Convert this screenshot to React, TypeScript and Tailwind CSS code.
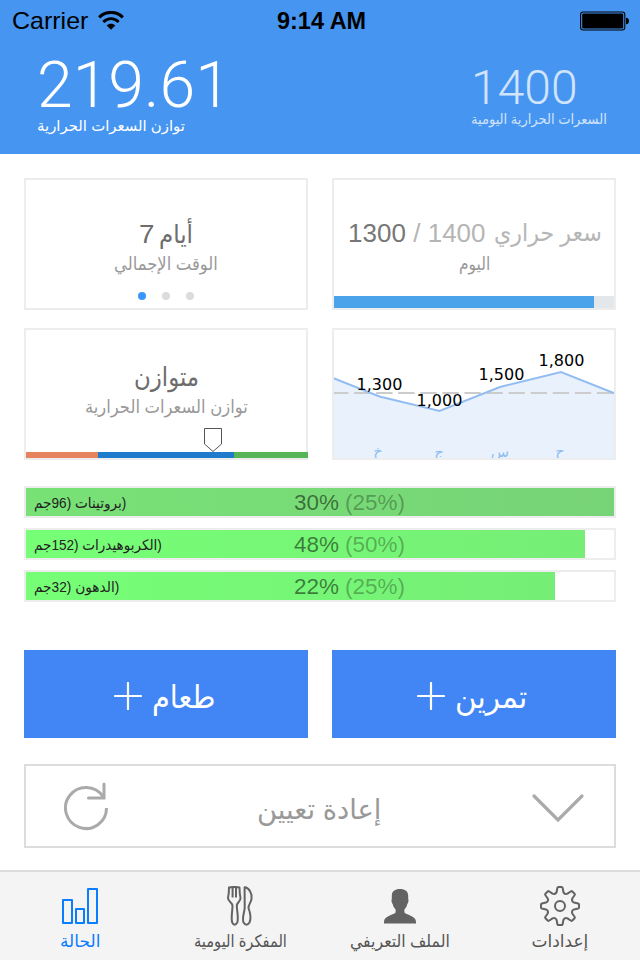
import { useLayoutEffect, useRef, useState } from "react";
import type { ReactNode } from "react";

type FitProps = { w: number; className?: string; dir?: "rtl" | "ltr"; children: ReactNode };

/* A single line of text, condensed or stretched horizontally to a fixed measure. */
function Fit({ w, className = "", dir = "rtl", children }: FitProps) {
  const ref = useRef<HTMLSpanElement>(null);
  const [scale, setScale] = useState(1);
  useLayoutEffect(() => {
    if (ref.current) setScale(w / ref.current.offsetWidth);
  }, [w]);
  return (
    <div dir="ltr" className={`shrink-0 whitespace-nowrap ${className}`} style={{ width: w }}>
      <span ref={ref} dir={dir} className="inline-block origin-left" style={{ transform: `scaleX(${scale})` }}>
        {children}
      </span>
    </div>
  );
}

function StatusBar() {
  return (
    <div className="grid h-[42px] grid-cols-[1fr_auto_1fr] items-center pl-[12px] pr-[10px] text-black">
      <div className="flex items-center gap-[10px]">
        <Fit w={76} dir="ltr" className="text-[24px] leading-[42px]">Carrier</Fit>
        <svg className="h-[20px] w-[26px]" viewBox="0 0 26 20" fill="none" stroke="#000">
          <path d="M1.2 6.3C8 -.1 18 -.1 24.8 6.3" strokeWidth="3.2" />
          <path d="M5.3 11C10 6.8 16 6.8 20.7 11" strokeWidth="3" />
          <path d="M8.7 14.4C11.1 12.2 14.9 12.2 17.3 14.4L13 18.7Z" fill="#000" stroke="none" />
        </svg>
      </div>
      <Fit w={89} dir="ltr" className="text-[24px] font-bold leading-[42px]">9:14 AM</Fit>
      <svg className="h-[20px] w-[50px] justify-self-end" viewBox="0 0 50 20">
        <rect x=".6" y="1" width="44.2" height="18" rx="2.5" fill="none" stroke="#000" strokeWidth="1.1" />
        <rect x="2.2" y="2.5" width="41" height="15" rx="1.2" />
        <path d="M46 6.8c2 0 3 1.3 3 3.2s-1 3.2-3 3.2z" />
      </svg>
    </div>
  );
}

function Header() {
  return (
    <header className="h-[154px] bg-[#4595f1]">
      <StatusBar />
      <div className="flex justify-between pl-[37px] pr-[33px] text-white">
        <div className="pt-[12px]">
          <Fit w={194} dir="ltr" className="h-[62px] font-['Roboto'] text-[64px] font-light leading-[64px]">219.61</Fit>
          <Fit w={148} className="h-[20px] text-[15px] leading-[20px]">توازن السعرات الحرارية</Fit>
        </div>
        <div className="pt-[22px] opacity-75">
          <Fit w={107} dir="ltr" className="h-[46px] font-['Roboto'] text-[48px] font-light leading-[48px]">1400</Fit>
          <Fit w={136} className="h-[18px] text-[14px] leading-[18px]">السعرات الحرارية اليومية</Fit>
        </div>
      </div>
    </header>
  );
}

const card = "flex h-[132px] flex-col items-center overflow-hidden border-2 border-[#ededed]";

function Chart() {
  return (
    <svg className="block h-[128px] w-[280px]" viewBox="334 330 280 128" fontFamily="'DejaVu Sans', sans-serif">
      <path d="M334 378.5L379.5 396.5L439.5 411L500 387L561 372L614 393V458H334Z" fill="#e9f2fc" />
      <path d="M332 393H614" stroke="#ccc" strokeWidth="2" strokeDasharray="16.4 5.67" />
      <path d="M333 378L379.5 396.5L439.5 411L500 387L561 372L615 393.5" fill="none" stroke="#93bdf0" strokeWidth="2" />
      <g fontSize="16" fill="#000">
        <text x="356.500" y="390">1,300</text>
        <text x="416.500" y="406">1,000</text>
        <text x="478.500" y="380">1,500</text>
        <text x="538.500" y="366">1,800</text>
      </g>
      <g fontSize="15" fill="#8fbdf0" textAnchor="middle">
        <text x="378" y="457">خ</text>
        <text x="439" y="457">ج</text>
        <text x="500" y="457">س</text>
        <text x="560" y="457">ح</text>
      </g>
    </svg>
  );
}

function Cards() {
  return (
    <section className="grid grid-cols-2 gap-x-6 gap-y-[18px]">
      <div className={card}>
        <div className="mt-[38px] flex h-[32px] items-center gap-[5px] leading-[32px] text-[#6d6d6d]">
          <Fit w={15} dir="ltr" className="text-[26px]">7</Fit>
          <Fit w={34} className="text-[25px]">أيام</Fit>
        </div>
        <Fit w={104} className="h-[28px] text-[18px] leading-[28px] text-[#999]">الوقت الإجمالي</Fit>
        <div className="mt-[14px] flex gap-4">
          <i className="size-2 rounded-full bg-[#3797fb]" />
          <i className="size-2 rounded-full bg-[#dcdcdc]" />
          <i className="size-2 rounded-full bg-[#dcdcdc]" />
        </div>
      </div>
      <div className={card}>
        <div className="ml-[2px] mt-[37px] flex h-[32px] items-center leading-[32px] text-[#b5b5b5]">
          <Fit w={58} dir="ltr" className="text-[26px] text-[#777]">1300</Fit>
          <Fit w={80} dir="ltr" className="text-[26px]"><span className="whitespace-pre"> / 1400</span></Fit>
          <Fit w={108} className="ml-[8px] text-[24px]">سعر حراري</Fit>
        </div>
        <Fit w={31} className="mt-px h-[28px] text-[18px] leading-[28px] text-[#999]">اليوم</Fit>
        <div className="mt-auto h-[12px] w-full bg-[#e3e7ea]">
          <div className="h-full w-[260px] bg-[#4ba3ea]" />
        </div>
      </div>
      <div className="flex h-[132px] flex-col items-center border-2 border-[#ededed]">
        <Fit w={65} className="mt-[31px] h-[32px] text-[26px] leading-[32px] text-[#6d6d6d]">متوازن</Fit>
        <Fit w={163} className="h-[28px] text-[18px] leading-[29px] text-[#999]">توازن السعرات الحرارية</Fit>
        <svg className="ml-[94px] mt-[7px] h-[24px] w-[18px]" viewBox="0 0 18 24">
          <path d="M.5 .5H17.500V16L9 23.500L.5 16Z" fill="#fff" stroke="#555" />
        </svg>
        <div className="-mr-[2px] flex h-[6px] w-[282px] self-start">
          <div className="w-[72px] bg-[#e5835f]" />
          <div className="w-[136px] bg-[#1f7bcb]" />
          <div className="w-[74px] bg-[#57b558]" />
        </div>
      </div>
      <div className={card}>
        <Chart />
      </div>
    </section>
  );
}

const macros = [
  { name: "بروتينات (96جم", w: 92, pct: "30%", goal: "(25%)", fill: "w-[588px] from-[#78e276] to-[#77d377]" },
  { name: "الكربوهيدرات (152جم", w: 128, pct: "48%", goal: "(50%)", fill: "w-[559px] from-[#76ff76] to-[#76ee76]" },
  { name: "الدهون (32جم", w: 85, pct: "22%", goal: "(25%)", fill: "w-[529px] from-[#76ff76] to-[#76ee76]" },
];

function Macros() {
  return (
    <section className="mt-[26px] flex flex-col gap-[10px]">
      {macros.map((m) => (
        <div key={m.name} className="h-[32px] border-2 border-[#ededed]">
          <div className={`flex h-[28px] items-center bg-gradient-to-r pl-[8px] ${m.fill}`}>
            <div className="w-[260px]">
              <Fit w={m.w} dir="ltr" className="pt-px text-[14.5px] leading-[28px] text-[#222]">
                <bdi dir="rtl">{m.name}</bdi>)
              </Fit>
            </div>
            <Fit w={111} dir="ltr" className="pt-px text-[22px] leading-[28px] text-black/50">
              {m.pct} <span className="text-black/30">{m.goal}</span>
            </Fit>
          </div>
        </div>
      ))}
    </section>
  );
}

function Plus() {
  return (
    <svg className="size-[28px]" viewBox="0 0 28 28" stroke="#fff" strokeWidth="2.2" strokeLinecap="round">
      <path d="M14 1V27M1 14H27" />
    </svg>
  );
}

function Actions() {
  return (
    <>
      <section className="mt-[48px] grid grid-cols-2 gap-6">
        <button className="flex h-[88px] items-center justify-center gap-[10px] bg-[#4286f5] pr-[3px] pt-[4px] text-white">
          <Plus />
          <Fit w={63} className="pt-[2px] text-[32px] leading-[40px]">طعام</Fit>
        </button>
        <button className="flex h-[88px] items-center justify-center gap-[10px] bg-[#4286f5] pr-[4px] pt-[4px] text-white">
          <Plus />
          <Fit w={72} className="pt-[2px] text-[32px] leading-[40px]">تمرين</Fit>
        </button>
      </section>
      <button className="mt-[26px] flex h-[84px] w-full items-center justify-between border-2 border-[#dcdcdc] pl-[37px] pr-[29px]">
        <svg className="h-[50px] w-[46px]" viewBox="0 0 46 50" fill="none" stroke="#aaa" strokeWidth="3" strokeLinecap="round">
          <path d="M43.500 27A20.500 20.500 0 1 1 40.100 15.700" strokeLinecap="butt" />
          <path d="M41 3V17H25.500" />
        </svg>
        <Fit w={124} className="mr-[3px] pt-[7px] text-[28px] leading-[40px] text-[#999]">إعادة تعيين</Fit>
        <svg className="mt-[3px] h-[30px] w-[54px]" viewBox="0 0 54 30" fill="none" stroke="#aaa" strokeWidth="3.2" strokeLinecap="round">
          <path d="M3 3L27 27L51 3" />
        </svg>
      </button>
    </>
  );
}

function BarsIcon() {
  return (
    <svg className="size-[40px]" viewBox="0 0 40 40" fill="none" stroke="#0b7dff" strokeWidth="2" strokeLinejoin="round">
      <path d="M3 14H12V37H3ZM16 23H24V37H16ZM28 3H37V37H28Z" />
    </svg>
  );
}

function CutleryIcon() {
  return (
    <svg className="size-[40px]" viewBox="0 0 40 40" fill="none" stroke="#636363" strokeWidth="2" strokeLinejoin="round">
      <path d="M9 1.500Q14.500 .4 19.500 1.500Q19.500 8 20.500 12C20.500 16 16.800 16 16.800 20C17 25 18.700 32 17.300 36.500Q14.500 41 12.200 36.500C10.800 32 12.500 25 12.500 20C12.500 16 8 16 8 12Q9 8 9 1.500Z" />
      <path d="M12.600 2V11.500M16 2V11.500" />
      <path d="M24.600 1.300C29 1.500 32.500 8 31.500 13C30.800 17 28.500 18.500 28.500 22C30 26 31.500 32 29.500 36.500Q26.500 41 23.500 36.500C21.800 32 24.500 26 24.700 22Z" />
    </svg>
  );
}

function ProfileIcon() {
  return (
    <svg className="size-[40px]" viewBox="0 0 40 40" fill="#636363">
      <path d="M20 3C25 3 28.200 5 28.200 10V13C29 14 28.300 17 27.300 18C26.800 21 25.500 22 24.400 23.500V26.500C27 29.500 36 29.500 36 36V37.500H4V36C4 29.500 13 29.500 15.600 26.500V23.500C14.500 22 13.200 21 12.700 18C11.700 17 11 14 11.800 13V10C11.800 5 15 3 20 3Z" />
    </svg>
  );
}

/* Eight identical teeth joined by rounded valleys. */
function gearPath() {
  const at = (x: number, y: number, k: number) => {
    const a = (k * Math.PI) / 4;
    const px = x * Math.cos(a) - y * Math.sin(a);
    const py = x * Math.sin(a) + y * Math.cos(a);
    return `${px.toFixed(2)} ${py.toFixed(2)}`;
  };
  let d = "";
  for (let k = 0; k < 8; k++) {
    d += `${k ? "L" : "M"}${at(-3.4, -14, k)}L${at(-2.6, -18.2, k)}Q${at(-2.4, -19, k)} ${at(-1.6, -19, k)}`;
    d += `L${at(1.6, -19, k)}Q${at(2.4, -19, k)} ${at(2.6, -18.2, k)}L${at(3.4, -14, k)}`;
    d += `Q${at(4.6, -11.1, k)} ${at(-3.4, -14, k + 1)}`;
  }
  return `${d}Z`;
}

function GearIcon() {
  return (
    <svg className="size-[40px]" viewBox="-20 -20 40 40" fill="none" stroke="#636363" strokeWidth="2" strokeLinejoin="round">
      <circle r="5" />
      <path d={gearPath()} />
    </svg>
  );
}

const tabs = [
  { label: "الحالة", w: 40, icon: <BarsIcon />, color: "text-[#0b7dff]" },
  { label: "المفكرة اليومية", w: 93, icon: <CutleryIcon />, color: "text-[#555]" },
  { label: "الملف التعريفي", w: 100, icon: <ProfileIcon />, color: "text-[#555]" },
  { label: "إعدادات", w: 57, icon: <GearIcon />, color: "text-[#555]" },
];

export default function App() {
  return (
    <div className="flex h-[960px] w-[640px] flex-col overflow-hidden bg-white font-['Liberation_Sans','DejaVu_Sans',sans-serif]">
      <Header />
      <main className="px-6 pt-6">
        <Cards />
        <Macros />
        <Actions />
      </main>
      <nav className="mt-auto grid h-[90px] grid-cols-4 border-t-2 border-[#dcdcdc] bg-[#f4f4f4]">
        {tabs.map((t) => (
          <a key={t.label} className={`flex flex-col items-center pt-[14px] ${t.color}`}>
            {t.icon}
            <Fit w={t.w} className="h-[32px] text-[17px] leading-[32px]">{t.label}</Fit>
          </a>
        ))}
      </nav>
    </div>
  );
}
